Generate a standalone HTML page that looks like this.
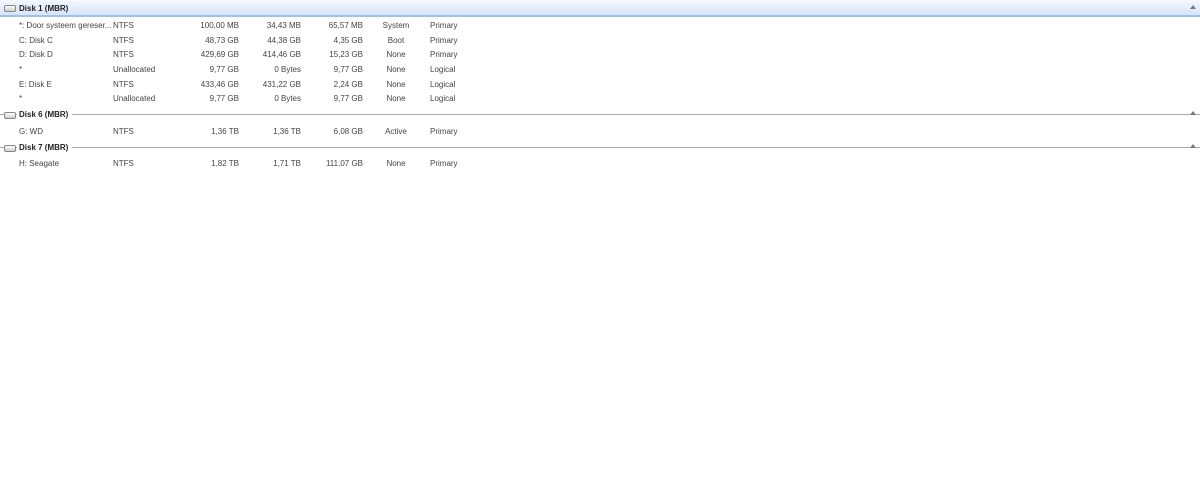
<!DOCTYPE html>
<html><head><style>
body{margin:0;width:1200px;height:493px;background:#fff;font-family:"Liberation Sans",sans-serif;font-size:8px;color:#444;position:relative;overflow:hidden}
.a{position:absolute;white-space:nowrap;line-height:10px}
.r{text-align:right}
.h{position:absolute;left:0;width:1200px}
.t{position:absolute;left:17px;padding-left:2px;font-weight:bold;font-size:8px;color:#222;background:#fff;padding-right:4px;line-height:10px}
.ic{position:absolute;left:4px;width:10px;height:5px;border:1px solid #888;border-radius:2px;background:linear-gradient(#fff,#ccc)}
.ar{position:absolute;left:1190px;width:0;height:0;border-left:3px solid transparent;border-right:3px solid transparent;border-bottom:4px solid #777}
</style></head><body>
<div class="h" style="top:0;height:15px;background:linear-gradient(#f4f8fe,#d7e4f8)"></div>
<div class="h" style="top:15px;height:2px;background:#9ec0ee"></div>
<div class="ic" style="top:5px"></div>
<div class="a" style="left:19px;top:4px;font-weight:bold;color:#222">Disk 1 (MBR)</div>
<div class="ar" style="top:5px"></div>

<div class="h" style="top:114px;height:1px;background:#aaa"></div>
<div class="ic" style="top:112px"></div>
<div class="t" style="top:110px">Disk 6 (MBR)</div>
<div class="ar" style="top:111px"></div>

<div class="h" style="top:147px;height:1px;background:#aaa"></div>
<div class="ic" style="top:145px"></div>
<div class="t" style="top:143px">Disk 7 (MBR)</div>
<div class="ar" style="top:144px"></div>

<div id="rows"></div>
<script>
var R=[[21,"*: Door systeem gereser...","NTFS","100,00 MB","34,43 MB","65,57 MB","System","Primary"],
[36,"C: Disk C","NTFS","48,73 GB","44,38 GB","4,35 GB","Boot","Primary"],
[50,"D: Disk D","NTFS","429,69 GB","414,46 GB","15,23 GB","None","Primary"],
[65,"*","Unallocated","9,77 GB","0 Bytes","9,77 GB","None","Logical"],
[80,"E: Disk E","NTFS","433,46 GB","431,22 GB","2,24 GB","None","Logical"],
[94,"*","Unallocated","9,77 GB","0 Bytes","9,77 GB","None","Logical"],
[127,"G: WD","NTFS","1,36 TB","1,36 TB","6,08 GB","Active","Primary"],
[159,"H: Seagate","NTFS","1,82 TB","1,71 TB","111,07 GB","None","Primary"]];
var h="";R.forEach(function(r){var y=r[0];
h+='<div class="a" style="left:19px;top:'+y+'px">'+r[1]+'</div>';
h+='<div class="a" style="left:113px;top:'+y+'px">'+r[2]+'</div>';
h+='<div class="a r" style="left:160px;width:79px;top:'+y+'px">'+r[3]+'</div>';
h+='<div class="a r" style="left:222px;width:79px;top:'+y+'px">'+r[4]+'</div>';
h+='<div class="a r" style="left:284px;width:79px;top:'+y+'px">'+r[5]+'</div>';
h+='<div class="a" style="left:366px;width:60px;text-align:center;top:'+y+'px">'+r[6]+'</div>';
h+='<div class="a" style="left:430px;top:'+y+'px">'+r[7]+'</div>';});
document.getElementById("rows").innerHTML=h;
</script>
</body></html>
